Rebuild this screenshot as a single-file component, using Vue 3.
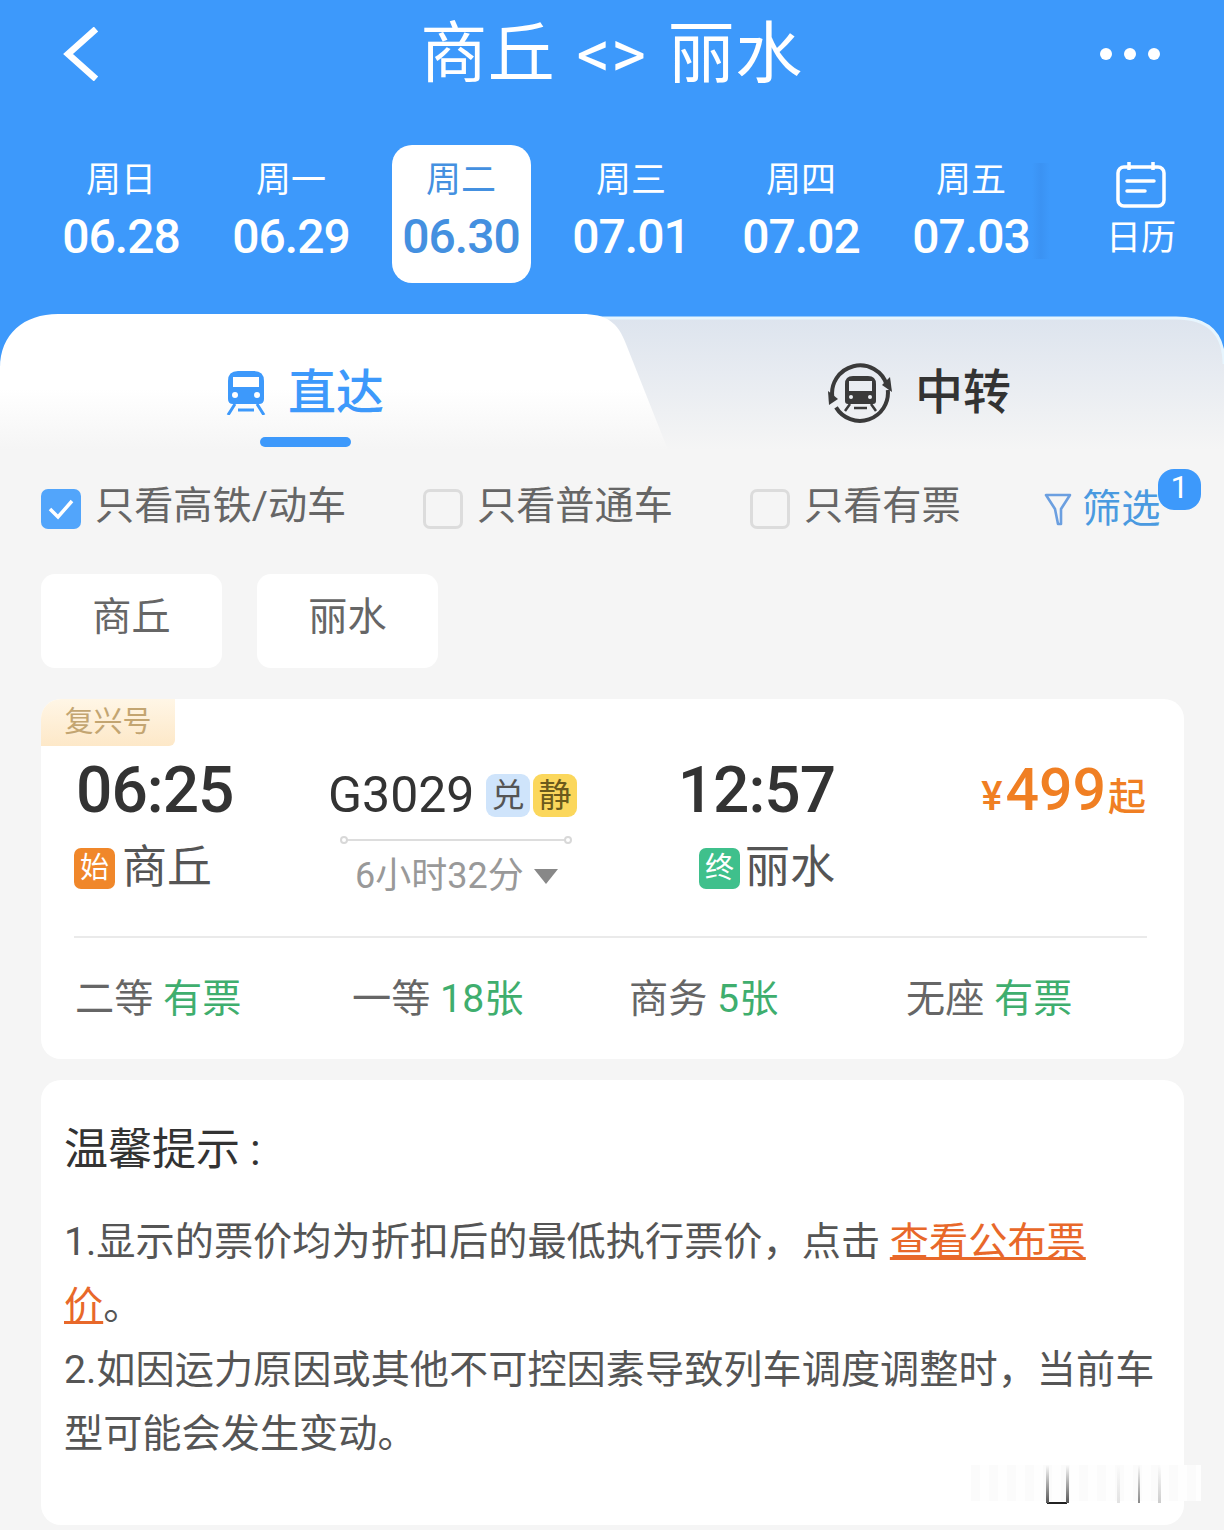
<script setup>
import { ref } from 'vue';

const title = '商丘 <> 丽水';
const activeDay = ref(2);
const days = [
  { week: '周日', date: '06.28' },
  { week: '周一', date: '06.29' },
  { week: '周二', date: '06.30' },
  { week: '周三', date: '07.01' },
  { week: '周四', date: '07.02' },
  { week: '周五', date: '07.03' },
];
const filters = [
  { label: '只看高铁/动车', checked: true },
  { label: '只看普通车', checked: false },
  { label: '只看有票', checked: false },
];
const seats = [
  { name: '二等', left: '有票' },
  { name: '一等', left: '18张' },
  { name: '商务', left: '5张' },
  { name: '无座', left: '有票' },
];
</script>

<template>
  <div class="page">
    <header class="top">
      <div class="nav">
        <svg class="back" viewBox="0 0 36 54" width="36" height="54">
          <path d="M33 2 L5 27 L33 52" fill="none" stroke="#fff" stroke-width="6.5" />
        </svg>
        <h1 class="title">{{ title }}</h1>
        <svg class="more" viewBox="0 0 60 12" width="60" height="12">
          <circle cx="6" cy="6" r="6" fill="#fff" />
          <circle cx="30" cy="6" r="6" fill="#fff" />
          <circle cx="54" cy="6" r="6" fill="#fff" />
        </svg>
      </div>
      <div class="days">
        <div
          v-for="(d, i) in days"
          :key="d.date"
          class="day"
          :class="{ active: i === activeDay }"
        >
          <span class="week">{{ d.week }}</span>
          <span class="date">{{ d.date }}</span>
        </div>
        <div class="calendar">
          <svg viewBox="0 0 50 46" width="50" height="46">
            <rect x="2" y="5" width="46" height="39" rx="6" fill="none" stroke="#fff" stroke-width="3.5" />
            <path d="M13 0 V8 M37 0 V8" stroke="#fff" stroke-width="3.5" />
            <path d="M11 19 H38 M11 29 H29" stroke="#fff" stroke-width="3.5" stroke-linecap="round" />
          </svg>
          <span class="cal-label">日历</span>
        </div>
      </div>
    </header>

    <div class="tabs">
      <svg class="tab-bg" viewBox="0 0 1224 136" width="1224" height="136">
        <defs>
          <linearGradient id="leftFill" x1="0" y1="0" x2="0" y2="1">
            <stop offset="0.55" stop-color="#ffffff" />
            <stop offset="1" stop-color="#f5f5f5" />
          </linearGradient>
          <linearGradient id="rightFill" x1="0" y1="0" x2="0" y2="1">
            <stop offset="0" stop-color="#dde4ee" />
            <stop offset="1" stop-color="#f5f5f5" />
          </linearGradient>
        </defs>
        <path d="M560 4 H1176 Q1224 4 1224 50 V136 H560 Z" fill="url(#rightFill)" />
        <path d="M560 4 H1176 Q1224 4 1224 50" fill="none" stroke="#e6f5fe" stroke-width="3" />
        <path d="M0 136 V54 C0 20 24 0 58 0 H582 C606 0 618 8 626 30 L668 136 Z" fill="url(#leftFill)" />
      </svg>
      <div class="tab tab-on">
        <svg viewBox="0 0 40 44" width="40" height="44">
          <path d="M2 10 Q2 0 12 0 H28 Q38 0 38 10 V28 Q38 33 33 33 H7 Q2 33 2 28 Z M7 6 V16 H33 V6 Z" fill="#3d99fb" fill-rule="evenodd" />
          <circle cx="9" cy="24" r="3" fill="#fff" />
          <circle cx="31" cy="24" r="3" fill="#fff" />
          <path d="M9 33 L2 44 M31 33 L38 44 M12 39 H28" stroke="#3d99fb" stroke-width="3" fill="none" />
        </svg>
        <span>直达</span>
        <i class="tab-line"></i>
      </div>
      <div class="tab tab-off">
        <svg viewBox="0 0 64 62" width="64" height="62">
          <path d="M4.6 36.7 A28 28 0 0 1 58.9 23.3" fill="none" stroke="#3a3a3a" stroke-width="4" />
          <path d="M59.8 28 A28 28 0 0 1 8 45.4" fill="none" stroke="#3a3a3a" stroke-width="4" />
          <path d="M54 23 L62 15 L64 30 Z" fill="#3a3a3a" />
          <path d="M0 29 L1 43 L10 37 Z" fill="#3a3a3a" />
          <path d="M17 22 Q17 14 25 14 H40 Q48 14 48 22 V39 Q48 42 45 42 H20 Q17 42 17 39 Z M21 19 V29 H44 V19 Z" fill="#3a3a3a" fill-rule="evenodd" />
          <circle cx="23" cy="35" r="2" fill="#eef1f5" />
          <circle cx="42" cy="35" r="2" fill="#eef1f5" />
          <path d="M22 42 L17 49 M43 42 L48 49 M26 46 H39" stroke="#3a3a3a" stroke-width="2.5" fill="none" />
        </svg>
        <span>中转</span>
      </div>
    </div>

    <div class="filters">
      <label v-for="f in filters" :key="f.label" class="filter">
        <span class="box" :class="{ checked: f.checked }">
          <svg v-if="f.checked" viewBox="0 0 28 24" width="28" height="24">
            <path d="M3 12 L11 20 L25 4" fill="none" stroke="#fff" stroke-width="3.5" />
          </svg>
        </span>
        <span class="filter-text">{{ f.label }}</span>
      </label>
      <div class="screen">
        <svg viewBox="0 0 28 34" width="28" height="34">
          <path d="M2 3 H26 L17 17 V32 H14 L11 17 Z" fill="none" stroke="#6b9fe0" stroke-width="2.6" stroke-linejoin="round" />
        </svg>
        <span>筛选</span>
        <b class="count">1</b>
      </div>
    </div>

    <div class="chips">
      <div class="chip">商丘</div>
      <div class="chip">丽水</div>
    </div>

    <section class="card train">
      <div class="tag">复兴号</div>
      <div class="main">
        <div class="col-from">
          <div class="time">06:25</div>
          <div class="station">
            <i class="mark mark-start">始</i>
            <span>商丘</span>
          </div>
        </div>
        <div class="col-mid">
          <div class="code">
            <span class="code-no">G3029</span>
            <i class="flag flag-blue">兑</i>
            <i class="flag flag-yellow">静</i>
          </div>
          <div class="track"></div>
          <div class="duration">
            <span>6小时32分</span>
            <i class="caret"></i>
          </div>
        </div>
        <div class="col-to">
          <div class="time">12:57</div>
          <div class="station">
            <i class="mark mark-end">终</i>
            <span>丽水</span>
          </div>
        </div>
        <div class="price"><small>¥</small>499<em>起</em></div>
      </div>
      <div class="divider"></div>
      <div class="seats">
        <div v-for="s in seats" :key="s.name" class="seat">
          {{ s.name }} <span class="left">{{ s.left }}</span>
        </div>
      </div>
    </section>

    <section class="card notice">
      <h2 class="notice-title">温馨提示<span class="colon">:</span></h2>
      <p>1.显示的票价均为折扣后的最低执行票价，点击 <a class="link">查看公布票</a><a class="link">价</a>。</p>
      <p>2.如因运力原因或其他不可控因素导致列车调度调整时，当前车型可能会发生变动。</p>
      <div class="watermark"></div>
    </section>
  </div>
</template>

<style scoped>
.page {
  width: 1224px;
  height: 1530px;
  overflow: hidden;
  background: #f5f5f5;
  color: #333;
  font-family: Roboto, "Noto Sans CJK SC", sans-serif;
}

.top {
  background: #3d99fb;
  height: 314px;
}

.nav {
  height: 108px;
  display: grid;
  grid-template-columns: 1fr auto 1fr;
  align-items: center;
  padding: 0 64px 0 63px;
}

.back {
  display: block;
}

.more {
  display: block;
  justify-self: end;
}

.title {
  margin: 0;
  font-size: 67px;
  font-weight: 400;
  color: #fff;
  line-height: 108px;
  word-spacing: 4px;
  letter-spacing: 0.5px;
}

.days {
  margin-top: 37px;
  padding-left: 36px;
  display: grid;
  grid-template-columns: repeat(7, 170px);
}

.day {
  width: 139px;
  height: 138px;
  justify-self: center;
  border-radius: 20px;
  display: flex;
  flex-direction: column;
  align-items: center;
  color: #fff;
}

.day.active {
  background: #fff;
  color: #4490e0;
}

.week {
  margin-top: 14px;
  font-size: 35px;
  line-height: 44px;
}

.date {
  margin-top: 4px;
  font-size: 48px;
  font-weight: 500;
  line-height: 60px;
  letter-spacing: -1px;
}

.calendar {
  display: flex;
  flex-direction: column;
  align-items: center;
  padding-top: 17px;
  color: #fff;
  position: relative;
}

.calendar svg {
  display: block;
}

.calendar::before {
  content: "";
  position: absolute;
  left: -24px;
  top: 18px;
  width: 18px;
  height: 96px;
  background: linear-gradient(90deg, rgba(50, 120, 210, 0), rgba(50, 120, 210, 0.2), rgba(50, 120, 210, 0));
}

.cal-label {
  margin-top: 6px;
  font-size: 35px;
  line-height: 50px;
}

.tabs {
  position: relative;
  height: 136px;
  display: grid;
  grid-template-columns: 612px 612px;
  background: linear-gradient(#3d99fb 60px, #f5f5f5 60px);
}

.tab-bg {
  position: absolute;
  left: 0;
  top: 0;
  display: block;
}

.tab {
  position: relative;
  display: flex;
  align-items: center;
  font-size: 48px;
  font-weight: 500;
  height: 100px;
}

.tab span {
  margin-top: -10px;
}

.tab-on {
  color: #3d99fb;
  padding: 29px 0 0 226px;
  gap: 22px;
}

.tab-off {
  color: #333;
  padding: 29px 0 0 216px;
  gap: 23px;
}

.tab-line {
  position: absolute;
  left: 260px;
  top: 123px;
  width: 91px;
  height: 10px;
  border-radius: 5px;
  background: #3d99fb;
}

.filters {
  height: 124px;
  padding: 39px 0 0 41px;
  box-sizing: border-box;
  display: grid;
  grid-template-columns: 382px 327px 294px auto;
  align-items: start;
  font-size: 39.2px;
  line-height: 40px;
  color: #666;
}

.filter {
  display: flex;
  align-items: center;
  gap: 14px;
}

.filter-text {
  margin-top: -6px;
}

.box {
  width: 40px;
  height: 40px;
  box-sizing: border-box;
  border-radius: 7px;
  border: 3px solid #dcdcdc;
  display: flex;
  align-items: center;
  justify-content: center;
}

.box.checked {
  border: none;
  background: #52a5fb;
}

.screen {
  position: relative;
  display: flex;
  align-items: center;
  gap: 10px;
  color: #4a9ae0;
}

.count {
  position: absolute;
  left: 114px;
  top: -20px;
  width: 43px;
  height: 41px;
  border-radius: 16px;
  background: #3d99fb;
  color: #fff;
  font-size: 32px;
  font-weight: 400;
  line-height: 36px;
  text-align: center;
}

.chips {
  display: flex;
  gap: 35px;
  padding-left: 41px;
}

.chip {
  width: 181px;
  height: 94px;
  border-radius: 14px;
  background: #fff;
  font-size: 39.2px;
  line-height: 86px;
  text-align: center;
  color: #666;
}

.card {
  position: relative;
  margin: 0 40px 0 41px;
  background: #fff;
  border-radius: 20px;
}

.train {
  margin-top: 31px;
  height: 360px;
  overflow: hidden;
}

.tag {
  width: 134px;
  height: 47px;
  line-height: 46px;
  text-align: center;
  font-size: 29px;
  color: #c3a571;
  border-radius: 0 0 6px 0;
  background: linear-gradient(#fff6e6, #fde8c8);
}

.main {
  display: flex;
  padding: 13px 38px 0 33px;
  height: 143px;
}

.col-from {
  width: 255px;
}

.col-mid {
  width: 351px;
}

.col-to {
  width: 155px;
  display: flex;
  flex-direction: column;
  align-items: flex-end;
}

.time {
  font-size: 64px;
  line-height: 64px;
  font-weight: 500;
  letter-spacing: -1px;
  color: #333;
}

.col-from .time {
  padding-left: 2px;
}

.station {
  display: flex;
  align-items: center;
  gap: 7px;
  margin-top: 23px;
  font-size: 45px;
  line-height: 44px;
  color: #555;
}

.mark {
  width: 41px;
  height: 41px;
  border-radius: 7px;
  font-style: normal;
  font-size: 29px;
  line-height: 41px;
  text-align: center;
  color: #fff;
}

.mark-start {
  background: #f0872a;
}

.mark-end {
  background: #3fc08c;
  margin-right: -2px;
}

.code {
  display: flex;
  align-items: center;
  height: 50px;
  margin-top: 11px;
}

.code-no {
  font-size: 50px;
  line-height: 50px;
  color: #333;
  width: 158px;
  margin-left: -1px;
}

.flag {
  width: 44px;
  height: 43px;
  margin-right: 3px;
  border-radius: 9px;
  font-style: normal;
  font-size: 33px;
  line-height: 43px;
  text-align: center;
  color: #555;
}

.flag-blue {
  background: #cfe4fb;
}

.flag-yellow {
  background: #fbd75c;
  color: #6b5a1c;
}

.track {
  position: relative;
  width: 228px;
  height: 2px;
  margin: 19px 0 0 13px;
  background: #ddd;
}

.track::before,
.track::after {
  content: "";
  position: absolute;
  top: -3px;
  width: 8px;
  height: 8px;
  box-sizing: border-box;
  border: 2px solid #d8d8d8;
  border-radius: 50%;
  background: #fff;
}

.track::before {
  left: -2px;
}

.track::after {
  right: -2px;
}

.duration {
  display: flex;
  align-items: center;
  gap: 10px;
  margin: 13px 0 0 26px;
  font-size: 36px;
  line-height: 44px;
  color: #999;
}

.caret {
  width: 0;
  height: 0;
  border-left: 12px solid transparent;
  border-right: 12px solid transparent;
  border-top: 15px solid #888;
}

.price {
  flex: 1;
  margin-top: -1px;
  text-align: right;
  font-size: 59px;
  line-height: 64px;
  font-weight: 500;
  color: #f07f23;
}

.price small {
  font-size: 40px;
  margin-right: 3px;
}

.price em {
  font-style: normal;
  font-size: 38px;
  margin-left: 2px;
}

.divider {
  height: 2px;
  margin: 34px 37px 0 33px;
  background: #eaeaea;
}

.seats {
  display: grid;
  grid-template-columns: repeat(4, 277px);
  padding: 37px 0 0 34px;
  font-size: 39.2px;
  line-height: 48px;
  color: #666;
}

.seat .left {
  color: #3fae6e;
}

.notice {
  margin-top: 21px;
  height: 445px;
  padding: 40px 24px 0 23px;
  box-sizing: border-box;
  font-size: 39.2px;
  line-height: 64px;
  color: #555;
}

.notice-title {
  margin: 0 0 30px;
  font-size: 44px;
  font-weight: 400;
  line-height: 60px;
  color: #333;
}

.colon {
  margin-left: 10px;
}

.notice p {
  margin: 0;
}

.link {
  color: #e8682a;
  text-decoration: underline;
}

/* faint stretched watermark left over from the screenshot */
.watermark {
  position: absolute;
  left: 930px;
  top: 385px;
  width: 230px;
  height: 39px;
  background:
    linear-gradient(rgba(60, 60, 60, 0), #555) 75px 0 / 3px 38px no-repeat,
    linear-gradient(rgba(60, 60, 60, 0), #555) 95px 0 / 3px 38px no-repeat,
    linear-gradient(#222, #222) 76px 37px / 20px 2px no-repeat,
    linear-gradient(rgba(80, 80, 80, 0), #888) 167px 0 / 2px 38px no-repeat,
    linear-gradient(rgba(120, 120, 120, 0), #ccc) 187px 0 / 3px 38px no-repeat,
    linear-gradient(rgba(120, 120, 120, 0), #e2e2e2) 146px 0 / 3px 38px no-repeat,
    repeating-linear-gradient(90deg, #fbfbfb 0 9px, #fefefe 9px 18px) 0 0 / 100% 36px no-repeat;
}
</style>
